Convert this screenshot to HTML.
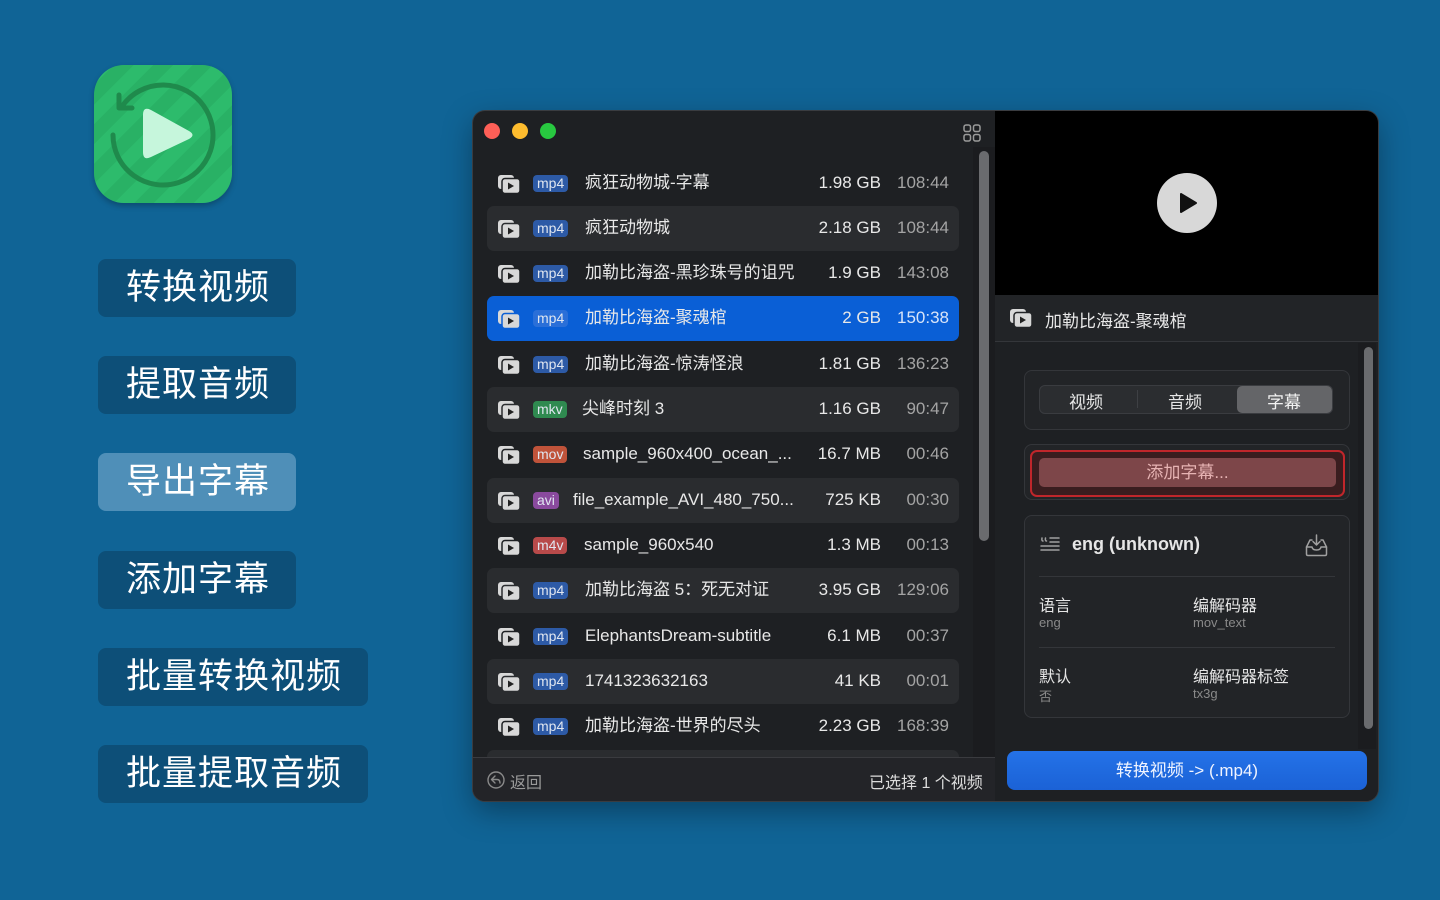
<!DOCTYPE html>
<html><head><meta charset="utf-8"><style>
*{box-sizing:border-box;margin:0;padding:0}
body{width:1440px;height:900px;background:#106496;font-family:"Liberation Sans","Noto Sans CJK SC",sans-serif;position:relative;overflow:hidden;color:#e8e8e8}
.a{position:absolute}
.lb{position:absolute;left:98px;height:58px;border-radius:8px;background:#0d4f78;color:#fff;font-size:35px;line-height:58px;padding-left:28px;letter-spacing:1px}
.win{position:absolute;left:473px;top:111px;width:905px;height:690px;border-radius:12px;background:#1e2023;overflow:hidden;box-shadow:0 0 0 1px #3a3c40,0 10px 30px rgba(0,0,0,.35)}
.row{position:absolute;left:14px;width:472px;height:45px;border-radius:7px;font-size:17px}
.row.b{background:#2a2c2f}
.row.s{background:#0a5fd6}
.row .ic{position:absolute;left:10px;top:13px}
.bd{position:absolute;left:46px;top:14px;height:17px;border-radius:4px;font-size:14px;line-height:17px;padding:0 4px;color:#e0e6f0}
.nm{position:absolute;top:11px;line-height:22px;white-space:nowrap;color:#e8e8e8}
.sz{position:absolute;right:78px;top:11px;line-height:22px;color:#e8e8e8}
.du{position:absolute;right:10px;top:11px;line-height:22px;color:#a4a4a4}
.card{position:absolute;left:1024px;width:326px;border:1px solid #34363a;border-radius:8px;background:#222427}
</style></head><body>

<div class="a" style="left:94px;top:65px;width:138px;height:138px;border-radius:30px;background:repeating-linear-gradient(135deg,#2dbb6c 0 14px,#29b165 14px 28px);box-shadow:0 3px 6px rgba(0,0,0,.25);overflow:hidden">
<svg width="138" height="138" viewBox="0 0 138 138"><path d="M29 40 A50 50 0 1 1 19 70" fill="none" stroke="#1f8a4c" stroke-width="5" stroke-linecap="round"/><path d="M25 30 L25 43 L38 43" fill="none" stroke="#1f8a4c" stroke-width="5" stroke-linecap="round" stroke-linejoin="round"/><path d="M57 45 Q49 41 49 50 L49 87 Q49 96 57 92 L95 74 Q102 70 95 66 Z" fill="#c6f6dc"/></svg></div>

<div class="lb" style="top:259px;width:198px">转换视频</div>
<div class="lb" style="top:356px;width:198px">提取音频</div>
<div class="lb" style="top:453px;width:198px;background:#4f8fb8">导出字幕</div>
<div class="lb" style="top:551px;width:198px">添加字幕</div>
<div class="lb" style="top:648px;width:270px">批量转换视频</div>
<div class="lb" style="top:745px;width:270px">批量提取音频</div>

<div class="win">
 <div class="a" style="left:11px;top:12px;width:16px;height:16px;border-radius:50%;background:#fe5f57"></div>
 <div class="a" style="left:39px;top:12px;width:16px;height:16px;border-radius:50%;background:#febc2e"></div>
 <div class="a" style="left:67px;top:12px;width:16px;height:16px;border-radius:50%;background:#28c840"></div>
 <svg class="a" style="left:490px;top:13px" width="18" height="18" viewBox="0 0 18 18" fill="none" stroke="#9a9a9a" stroke-width="1.5"><rect x="1" y="1" width="6.5" height="6.5" rx="2"/><rect x="10.5" y="1" width="6.5" height="6.5" rx="2"/><rect x="1" y="10.5" width="6.5" height="6.5" rx="2"/><rect x="10.5" y="10.5" width="6.5" height="6.5" rx="2"/></svg>
 <div class="a" style="left:500px;top:36px;width:22px;height:610px;background:#1b1c1f"></div>
 <div class="a" style="left:506px;top:40px;width:10px;height:390px;border-radius:5px;background:#6a6b6e"></div>

 <div class="a" style="left:0;top:40px;width:500px;height:606px;overflow:hidden">
 <div class="a" style="left:0;top:-40px;width:500px;height:700px" id="rows"></div>
 </div>

 <div class="a" style="left:0;top:646px;width:522px;height:44px;background:#232428;border-top:1px solid #3a3b3f"></div>
 <svg class="a" style="left:14px;top:660px" width="18" height="18" viewBox="0 0 18 18" fill="none" stroke="#8a8a8a" stroke-width="1.4"><circle cx="9" cy="9" r="8"/><path d="M8 5 L4.5 8.5 L8 12 M4.5 8.5 H10 Q13 8.5 13 12" stroke-linecap="round" stroke-linejoin="round"/></svg>
 <div class="a" style="left:37px;top:658px;font-size:16px;color:#9a9a9a">返回</div>
 <div class="a" style="left:396px;top:658px;font-size:16px;color:#dcdcdc">已选择 1 个视频</div>

 <div class="a" style="left:522px;top:0;width:383px;height:184px;background:#000"></div>
 <div class="a" style="left:684px;top:62px;width:60px;height:60px;border-radius:50%;background:#d8d8d8"></div>
 <svg class="a" style="left:684px;top:62px" width="60" height="60" viewBox="0 0 60 60"><path d="M24 21 L39 30 L24 39 Z" fill="#111" stroke="#111" stroke-width="2" stroke-linejoin="round"/></svg>
 <div class="a" style="left:522px;top:184px;width:383px;height:47px;background:#222427;border-bottom:1px solid #34363a"></div>
 <svg class="a" style="left:536px;top:197px" width="24" height="20" viewBox="0 0 24 20"><rect x="1" y="1" width="16" height="14" rx="3" fill="#d8d8d8"/><rect x="5" y="4.5" width="18" height="15" rx="3" fill="#d8d8d8" stroke="#222427" stroke-width="1.5"/><path d="M11 8.5 L17 12 L11 15.5Z" fill="#222"/></svg>
 <div class="a" style="left:572px;top:196px;font-size:17px;color:#e8e8e8">加勒比海盗-聚魂棺</div>
 <div class="a" style="left:522px;top:232px;width:383px;height:406px;background:#1e2023"></div>
 <div class="a" style="left:885px;top:232px;width:18px;height:406px;background:#1b1c1f"></div>
 <div class="a" style="left:891px;top:236px;width:9px;height:382px;border-radius:5px;background:#6a6b6e"></div>
 <div class="a" style="left:522px;top:638px;width:383px;height:52px;background:#1e2023"></div>
 <div class="a" style="left:534px;top:640px;width:360px;height:39px;border-radius:8px;background:linear-gradient(#2472e8,#1b62d6);color:#f0f4ff;font-size:17px;text-align:center;line-height:39px">转换视频 -&gt; (.mp4)</div>
</div>

<div class="card" style="top:370px;height:60px"></div>
<div class="a" style="left:1039px;top:385px;width:294px;height:29px;border-radius:6px;background:#2b2d30;border:1px solid #3a3c40"></div>
<div class="a" style="left:1237px;top:386px;width:95px;height:27px;border-radius:5px;background:#646568"></div>
<div class="a" style="left:1137px;top:390px;width:1px;height:18px;background:#3e4044"></div>
<div class="a" style="left:1069px;top:388px;font-size:17px;color:#e6e6e6">视频</div>
<div class="a" style="left:1168px;top:388px;font-size:17px;color:#e6e6e6">音频</div>
<div class="a" style="left:1267px;top:388px;font-size:17px;color:#f2f2f2">字幕</div>

<div class="card" style="top:444px;height:56px"></div>
<div class="a" style="left:1030px;top:450px;width:315px;height:47px;border-radius:7px;border:2px solid #c0262b;background:#3a1d1f"></div>
<div class="a" style="left:1039px;top:458px;width:297px;height:29px;border-radius:5px;background:#7d4649;color:#e6b3b3;font-size:17px;text-align:center;line-height:29px">添加字幕...</div>

<div class="card" style="top:515px;height:203px"></div>
<svg class="a" style="left:1040px;top:536px" width="20" height="18" viewBox="0 0 20 18" fill="none" stroke="#a0a0a0" stroke-width="1.5"><path d="M2 2 Q1.5 5 3 5 M5.5 2 Q5 5 6.5 5 M10 2 H19 M10 6 H19 M1 10 H19 M1 14 H19" stroke-linecap="round"/></svg>
<div class="a" style="left:1072px;top:534px;font-size:18px;font-weight:bold;color:#e6e6e6">eng (unknown)</div>
<svg class="a" style="left:1305px;top:534px" width="23" height="23" viewBox="0 0 23 23" fill="none" stroke="#a0a0a0" stroke-width="1.5" stroke-linejoin="round" stroke-linecap="round"><path d="M11.5 1 V11 M8 7.5 L11.5 11 L15 7.5"/><path d="M7 6 H5 L1.5 13 V20 Q1.5 21.5 3 21.5 H20 Q21.5 21.5 21.5 20 V13 L18 6 H16"/><path d="M1.5 13 H7 Q7.5 16 11.5 16 Q15.5 16 16 13 H21.5"/></svg>
<div class="a" style="left:1039px;top:576px;width:296px;height:1px;background:#34363a"></div>
<div class="a" style="left:1039px;top:647px;width:296px;height:1px;background:#34363a"></div>
<div class="a" style="left:1039px;top:592px;font-size:16px;color:#e6e6e6">语言</div>
<div class="a" style="left:1039px;top:615px;font-size:13px;color:#8a8a8a">eng</div>
<div class="a" style="left:1193px;top:592px;font-size:16px;color:#e6e6e6">编解码器</div>
<div class="a" style="left:1193px;top:615px;font-size:13px;color:#8a8a8a">mov_text</div>
<div class="a" style="left:1039px;top:663px;font-size:16px;color:#e6e6e6">默认</div>
<div class="a" style="left:1039px;top:686px;font-size:13px;color:#8a8a8a">否</div>
<div class="a" style="left:1193px;top:663px;font-size:16px;color:#e6e6e6">编解码器标签</div>
<div class="a" style="left:1193px;top:686px;font-size:13px;color:#8a8a8a">tx3g</div>

<script>
var d=[["mp4","疯狂动物城-字幕","1.98 GB","108:44"],["mp4","疯狂动物城","2.18 GB","108:44"],["mp4","加勒比海盗-黑珍珠号的诅咒","1.9 GB","143:08"],["mp4","加勒比海盗-聚魂棺","2 GB","150:38"],["mp4","加勒比海盗-惊涛怪浪","1.81 GB","136:23"],["mkv","尖峰时刻 3","1.16 GB","90:47"],["mov","sample_960x400_ocean_...","16.7 MB","00:46"],["avi","file_example_AVI_480_750...","725 KB","00:30"],["m4v","sample_960x540","1.3 MB","00:13"],["mp4","加勒比海盗 5：死无对证","3.95 GB","129:06"],["mp4","ElephantsDream-subtitle","6.1 MB","00:37"],["mp4","1741323632163","41 KB","00:01"],["mp4","加勒比海盗-世界的尽头","2.23 GB","168:39"],["mp4","","",""]];
var col={mp4:"#2d5aa6",mkv:"#2f8a50",mov:"#c0533a",avi:"#8a4a9e",m4v:"#b84a4a"};
var nl={mp4:98,mkv:95,mov:96,avi:86,m4v:97};
var h="";
d.forEach(function(r,i){var top=183+45.33*i-22.5-111;var cls=i==3?"row s":(i%2==1?"row b":"row");
var bc=i==3?"#2a6fd8":col[r[0]];
h+='<div class="'+cls+'" style="top:'+top+'px">'+(r[1]?'<svg class="ic" width="24" height="20" viewBox="0 0 24 20"><rect x="1" y="1" width="16" height="14" rx="3" fill="#d8d8d8"/><rect x="5" y="4.5" width="18" height="15" rx="3" fill="#d8d8d8" stroke="'+(i==3?"#0a5fd6":(i%2==1?"#2a2c2f":"#1e2023"))+'" stroke-width="1.5"/><path d="M11 8.5 L17 12 L11 15.5Z" fill="#222"/></svg><div class="bd" style="background:'+bc+'">'+r[0]+'</div><div class="nm" style="left:'+nl[r[0]]+'px">'+r[1]+'</div><div class="sz">'+r[2]+'</div><div class="du"'+(i==3?' style="color:#d8e4f8"':'')+'>'+r[3]+'</div>':'')+'</div>';});
document.getElementById("rows").innerHTML=h;
</script>
</body></html>
